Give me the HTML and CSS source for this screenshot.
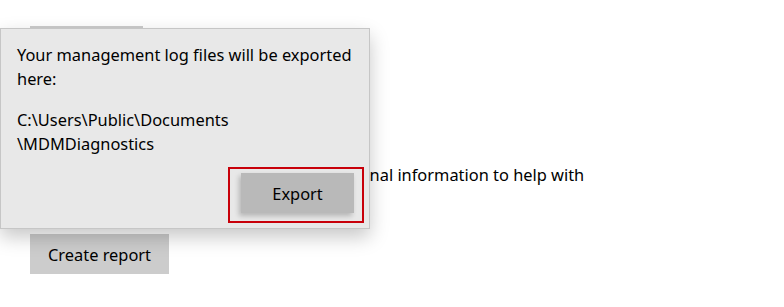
FILE: index.html
```html
<!DOCTYPE html>
<html lang="en">

<head>
    <meta charset="UTF-8">
    <meta name="viewport" content="width=device-width, initial-scale=1.0">
    <title>Export log files</title>

    <link rel="stylesheet" href="styles.css">
</head>

<body>

    <main>
        <button class="btn top-btn">Export</button>
        <p class="info">You can create a report that includes additional information to help with troubleshooting.</p>
        <button class="btn report-btn">Create report</button>
    </main>

    <!-- Export flyout -->
    <div class="flyout">
        <p>Your management log files will be exported here:</p>
        <p>C:\Users\Public\Documents<br>\MDMDiagnostics</p>
        <div class="flyout-actions">
            <div class="highlight">
                <button class="btn export-btn">Export</button>
            </div>
        </div>
    </div>

</body>

</html>
```

FILE: styles.css
```css
* {
    box-sizing: border-box;
    padding: 0;
    margin: 0;
}

body {
    background: #fff;
    color: #000;
    font-family: 'Noto Sans', sans-serif;
    font-size: 16.4px;
    min-height: 100vh;
    position: relative;
}

main {
    padding: 26px 30px 0;
    display: flex;
    flex-direction: column;
    align-items: flex-start;
}

/* Button Styling */
.btn {
    border: none;
    background: #cccccc;
    color: #000;
    font-family: inherit;
    font-size: 16.4px;
    height: 40px;
    padding: 0;
}

.top-btn {
    width: 113px;
}

.report-btn {
    width: 139px;
}

.info {
    width: 570px;
    line-height: 24px;
    margin: 97px 0 23px;
}

/* Flyout Styling */
.flyout {
    position: absolute;
    left: 0;
    top: 28px;
    width: 370px;
    height: 201px;
    background: #e8e8e8;
    border: 1px solid #c6c6c6;
    box-shadow: 0 8px 18px rgba(0, 0, 0, 0.22);
    padding: 14px 15px 0 16px;
    line-height: 24px;
}

.flyout p {
    margin-bottom: 17px;
}

.flyout p:last-of-type {
    margin-bottom: 11px;
}

.flyout-actions {
    display: flex;
    justify-content: flex-end;
}

.highlight {
    border: 2px solid #c8000a;
    padding: 4px 8px 8px 11px;
    margin-right: -10px;
}

.export-btn {
    width: 113px;
    background: #b9b9b9;
    box-shadow: -2px 3px 5px rgba(0, 0, 0, 0.22);
}
```
